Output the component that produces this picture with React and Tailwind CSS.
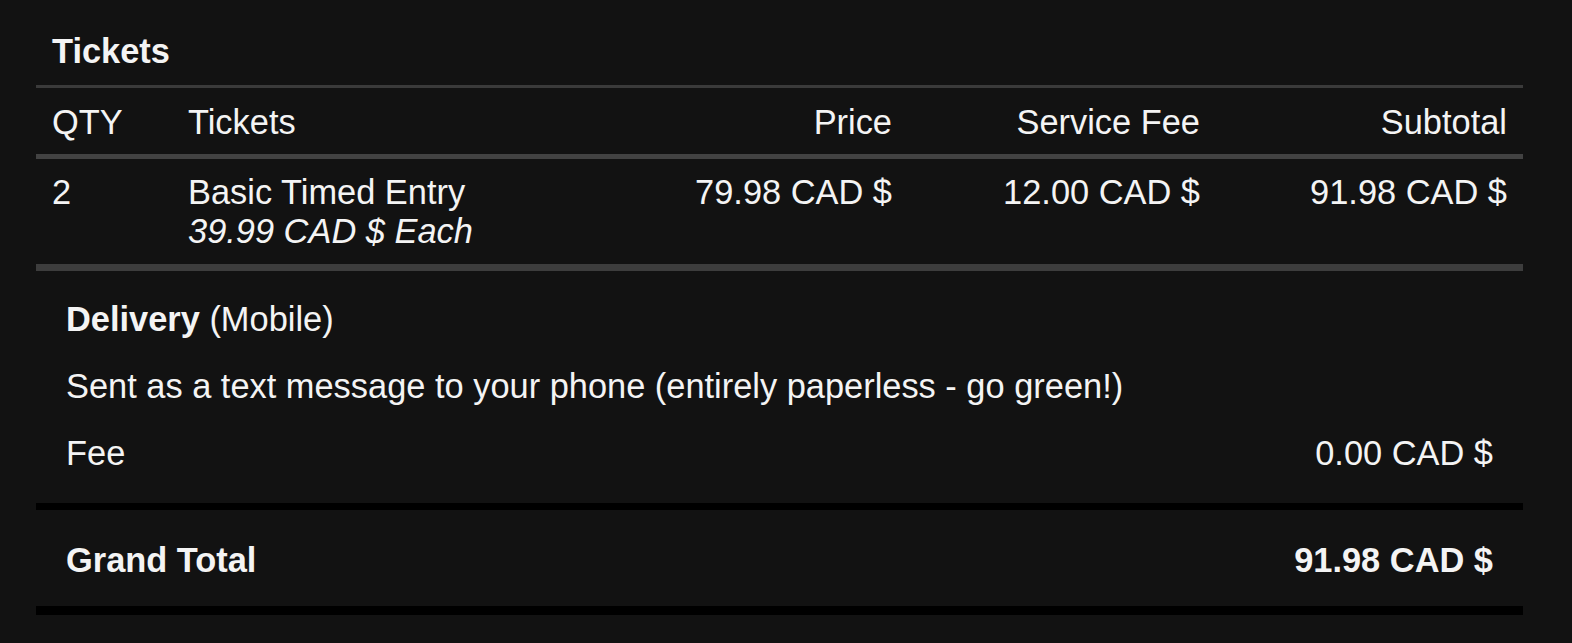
const row = "grid grid-cols-[136px_428px_308px_308px_307px]";

const lines = [
  { qty: 2, name: "Basic Timed Entry", each: "39.99 CAD $", price: "79.98 CAD $", fee: "12.00 CAD $", subtotal: "91.98 CAD $" },
];

const App = () => {
  return (
    <div className="min-h-[643px] bg-[#121212] text-[#f4f4f4] font-['Liberation_Sans',Arial,sans-serif] text-[34.4px] leading-[39px]">
      <div className="w-[1487px] ml-[36px] pt-[32px]">
        <h2 className="font-bold px-[16px] mb-[14px]">Tickets</h2>

        <div className="border-t-[3px] border-[#3a3a3a]">
          <div className={`${row} border-b-[5px] border-[#424242]`}>
            <div className="px-[16px] pt-[15px] pb-[12px]">QTY</div>
            <div className="px-[16px] pt-[15px] pb-[12px]">Tickets</div>
            <div className="px-[16px] pt-[15px] pb-[12px] text-right">Price</div>
            <div className="px-[16px] pt-[15px] pb-[12px] text-right">Service Fee</div>
            <div className="px-[16px] pt-[15px] pb-[12px] text-right">Subtotal</div>
          </div>

          {lines.map((line, index) => (
            <div key={index} className={`${row} border-b-[7px] border-[#3d3d3d]`}>
              <div className="px-[16px] pt-[14px] pb-[13px]">{line.qty}</div>
              <div className="px-[16px] pt-[14px] pb-[13px]">
                <div>{line.name}</div>
                <div className="italic">{line.each} Each</div>
              </div>
              <div className="px-[16px] pt-[14px] pb-[13px] text-right">{line.price}</div>
              <div className="px-[16px] pt-[14px] pb-[13px] text-right">{line.fee}</div>
              <div className="px-[16px] pt-[14px] pb-[13px] text-right">{line.subtotal}</div>
            </div>
          ))}
        </div>

        <div className="px-[30px] pt-[29px] pb-[30px] flex flex-col gap-[28px]">
          <p>
            <span className="font-bold">Delivery</span> (Mobile)
          </p>
          <p>Sent as a text message to your phone (entirely paperless - go green!)</p>
          <div className="flex justify-between">
            <span>Fee</span>
            <span>0.00 CAD $</span>
          </div>
        </div>

        <div className="border-t-[7px] border-b-[9px] border-black px-[30px] pt-[31px] pb-[26px] flex justify-between font-bold">
          <span>Grand Total</span>
          <span>91.98 CAD $</span>
        </div>
      </div>
    </div>
  );
};

export default App;
